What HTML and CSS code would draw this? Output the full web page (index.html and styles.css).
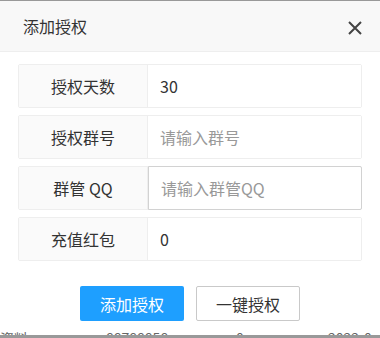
FILE: index.html
```html
<!DOCTYPE html>
<html lang="zh-CN">
<head>
  <meta charset="UTF-8">
  <title>添加授权</title>
  <link rel="stylesheet" href="styles.css">
</head>
<body>
  <div class="layer">
    <!-- 标题栏 -->
    <div class="layer-title">
      <span>添加授权</span>
      <a class="layer-close" href="#">
        <svg width="14" height="14" viewBox="0 0 14 14"><path d="M1 1L13 13M13 1L1 13" stroke="#444" stroke-width="2" fill="none"/></svg>
      </a>
    </div>

    <!-- 表单 -->
    <form class="form">
      <div class="form-item">
        <label class="form-label">授权天数</label>
        <input class="form-input" type="text" value="30">
      </div>
      <div class="form-item">
        <label class="form-label">授权群号</label>
        <input class="form-input" type="text" placeholder="请输入群号">
      </div>
      <div class="form-item hover">
        <label class="form-label">群管 QQ</label>
        <input class="form-input" type="text" placeholder="请输入群管QQ">
      </div>
      <div class="form-item">
        <label class="form-label">充值红包</label>
        <input class="form-input" type="text" value="0">
      </div>

      <div class="btn-row">
        <button type="button" class="btn btn-normal">添加授权</button>
        <button type="button" class="btn btn-primary">一键授权</button>
      </div>
    </form>
  </div>

  <!-- 底下的表格 -->
  <div class="behind">
    <span class="c1">车资料</span>
    <span class="c2">88788858</span>
    <span class="c3">0</span>
    <span class="c4">2022-0</span>
  </div>
  <div class="shade"></div>
</body>
</html>
```

FILE: styles.css
```css
body {
  margin: 0;
  padding: 0;
  background: #fff;
  font-family: "Noto Sans CJK SC", "Liberation Sans", sans-serif;
  color: #333;
}

.layer {
  border-top: 1px solid #999;
  background: #fff;
  height: 330px;
  box-sizing: border-box;
}

.layer-title {
  height: 50px;
  background: #f8f8f8;
  border-bottom: 1px solid #eee;
  display: flex;
  align-items: center;
  justify-content: space-between;
  padding: 0 18px 0 23px;
  font-size: 16px;
  color: #333;
}
.layer-close {
  display: flex;
  margin-top: 3px;
}

.form {
  padding: 12px 18px 0;
  display: flex;
  flex-direction: column;
  gap: 7px;
}

.form-item {
  display: flex;
  height: 44px;
  border: 1px solid #eee;
  border-radius: 2px;
  box-sizing: border-box;
}
.form-label {
  width: 128px;
  flex-shrink: 0;
  background: #fafafa;
  border-right: 1px solid #eee;
  display: flex;
  align-items: center;
  justify-content: center;
  font-size: 16px;
  color: #333;
}
.form-input {
  flex: 1;
  min-width: 0;
  border: none;
  outline: none;
  padding: 0 12px;
  font-family: inherit;
  font-size: 16px;
  color: #333;
  background: #fff;
}
.form-input::placeholder {
  color: #999;
}
.form-item.hover .form-input {
  border: 1px solid #d2d2d2;
  margin: -1px -1px -1px 0;
  border-radius: 0 2px 2px 0;
}

.btn-row {
  display: flex;
  justify-content: center;
  gap: 12px;
  margin-top: 18px;
}
.btn {
  width: 104px;
  height: 35px;
  border-radius: 2px;
  font-family: inherit;
  font-size: 16px;
  cursor: pointer;
  padding: 0;
}
.btn-normal {
  background: #1e9fff;
  border: none;
  color: #fff;
}
.btn-primary {
  background: #fff;
  border: 1px solid #c9c9c9;
  color: #333;
}

.behind {
  height: 5px;
  overflow: hidden;
  display: flex;
  font-size: 14px;
  line-height: 14px;
  color: #666;
  padding-top: 1px;
  box-sizing: border-box;
}
.behind span { flex-shrink: 0; }
.c1 { margin-left: -14px; width: 120px; }
.c2 { width: 130px; }
.c3 { width: 92px; }
.c4 { }

.shade {
  height: 3px;
  background: #999;
}
```
